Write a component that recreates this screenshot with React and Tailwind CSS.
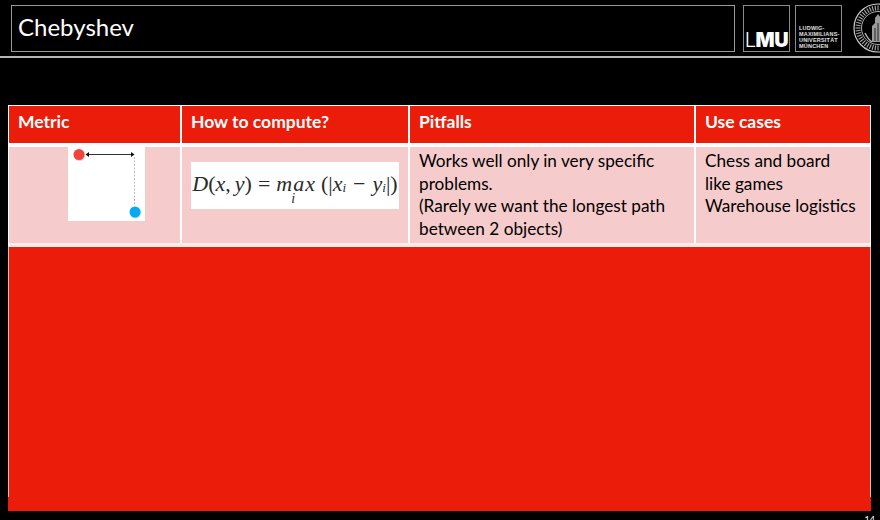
const Seal = () => {
    const ticks = Array.from({length: 48}, (_, i) => (i * 360) / 48);
    return (
        <svg width="50" height="50" viewBox="0 0 50 50" className="shrink-0">
            <circle cx="25" cy="25" r="24" fill="none" stroke="#c9c9c9" strokeWidth="1.2" />
            <circle cx="25" cy="25" r="16.5" fill="none" stroke="#bdbdbd" strokeWidth="0.9" />
            {ticks.map((a) => (
                <line key={a} x1="25" y1="2.5" x2="25" y2="7.5" stroke="#a8a8a8" strokeWidth="1.1" transform={`rotate(${a} 25 25)`} />
            ))}
            <path d="M19 39V23l3-3v-5l3-4 3 4v5l3 3v16z" fill="#9a9a9a" />
            <path d="M22 38V25M25 38V20M28 38V25" stroke="#222" strokeWidth="1" />
            <path d="M12 30c2 4 4 7 7 9M38 30c-2 4-4 7-7 9" stroke="#bbb" strokeWidth="1.4" fill="none" />
        </svg>
    );
};

const Distance = () => (
    <svg width="77" height="75" viewBox="0 0 77 75" className="block">
        <rect width="77" height="75" fill="#fff" />
        <circle cx="11.5" cy="9.5" r="5.5" fill="#d9d9d9" />
        <circle cx="67.5" cy="67" r="5.5" fill="#d9d9d9" />
        <circle cx="11" cy="8.5" r="5.5" fill="#f4433c" />
        <circle cx="67" cy="66" r="5.5" fill="#03a9f4" />
        <line x1="20" y1="8.5" x2="64" y2="8.5" stroke="#333" strokeWidth="1" />
        <path d="M17.500 8.500l3.500-2.500v5zM66.500 8.500l-3.500-2.500v5z" fill="#111" />
        <line x1="66.500" y1="11" x2="66.500" y2="59" stroke="#bbb" strokeWidth="1" strokeDasharray="2 1.500" />
    </svg>
);

const Formula = () => (
    <div className="flex h-[47px] w-[208px] shrink-0 items-center justify-center whitespace-nowrap bg-white pb-[3px] font-['Liberation_Serif',serif] text-[22px] leading-none text-[#2b2b2b]">
        <i>D</i>
        <span>(</span>
        <i>x</i>
        <span className="mr-1">,</span>
        <i>y</i>
        <span>)</span>
        <span className="mx-[6px]">=</span>
        <span className="relative italic tracking-[1px]">
            max
            <span className="absolute left-[15px] top-[19px] text-[14px]">i</span>
        </span>
        <span className="ml-[5px]">(|</span>
        <i>x</i>
        <i className="mt-[7px] text-[13px]">i</i>
        <span className="mx-[7px]">−</span>
        <i>y</i>
        <i className="mt-[7px] text-[13px]">i</i>
        <span>|)</span>
    </div>
);

const headers = [
    {label: "Metric", width: "w-[171px] pl-[9px]"},
    {label: "How to compute?", width: "w-[228px] border-l-2 border-white pl-[9px]"},
    {label: "Pitfalls", width: "w-[286px] border-l-2 border-white pl-[9px]"},
    {label: "Use cases", width: "flex-1 border-l-2 border-white pl-[9px]"}
];

const App = () => {
    return (
        <div className="h-[520px] w-[880px] overflow-hidden bg-black font-['Lato',sans-serif] text-white">
            <header className="flex h-[58px] border-b-2 border-[#b5b5b5]">
                <div className="ml-[11px] mt-[5px] flex h-[47px] w-[724px] shrink-0 items-center border border-[#9a9a9a] pb-[3px] pl-[6px] text-[24px] leading-none">
                    Chebyshev
                </div>
                <div className="ml-2 mt-[5px] flex h-[47px] w-[47px] shrink-0 items-end justify-center border border-[#8a8a8a] pb-[1px] font-['Inter',sans-serif] text-[20px] leading-none tracking-[-0.5px]">
                    <span className="font-light">L</span>
                    <span className="font-black">MU</span>
                </div>
                <div className="ml-[5px] mt-[5px] flex h-[47px] w-[47px] shrink-0 flex-col justify-end overflow-hidden border border-[#8a8a8a] pb-[2px] pl-[3px] font-['Liberation_Sans',sans-serif] text-[5.500px] font-bold leading-[6px] tracking-[0.2px] text-[#e0e0e0]">
                    <span>LUDWIG-</span>
                    <span>MAXIMILIANS-</span>
                    <span>UNIVERSITÄT</span>
                    <span>MÜNCHEN</span>
                </div>
                <div className="ml-[11px] mt-[3px] shrink-0">
                    <Seal />
                </div>
            </header>

            <main className="mx-[8px] mt-[47px] flex h-[406px] w-[863px] flex-col bg-[#ec1c0a]">
                <div className="flex h-[38px] border-x border-t border-white text-[17.500px] font-bold leading-none">
                    {headers.map((h) => (
                        <div key={h.label} className={`${h.width} flex items-center pb-[5px]`}>
                            {h.label}
                        </div>
                    ))}
                </div>
                <div className="flex h-[104px] border-x border-y-[4px] border-white border-b-[#fde9e9] bg-[#f5cbcb] text-[17.200px] leading-[22.700px] text-black">
                    <div className="flex w-[171px] justify-center pl-[23px]">
                        <div className="-mt-[1px]">
                            <Distance />
                        </div>
                    </div>
                    <div className="flex w-[228px] items-center justify-end border-l-2 border-white pb-[20px] pr-[9px]">
                        <Formula />
                    </div>
                    <div className="w-[286px] border-l-2 border-white pl-[9px] pt-[3px]">
                        <p>Works well only in very specific</p>
                        <p>problems.</p>
                        <p>(Rarely we want the longest path</p>
                        <p>between 2 objects)</p>
                    </div>
                    <div className="flex-1 border-l-2 border-white pl-[9px] pt-[3px]">
                        <p>Chess and board</p>
                        <p>like games</p>
                        <p>Warehouse logistics</p>
                    </div>
                </div>
                <div className="h-[250px] border-x border-[#c4c4c4]" />
            </main>

            <div className="mr-[5px] mt-[4px] text-right text-[9px] leading-none">14</div>
        </div>
    );
};

export default App;
